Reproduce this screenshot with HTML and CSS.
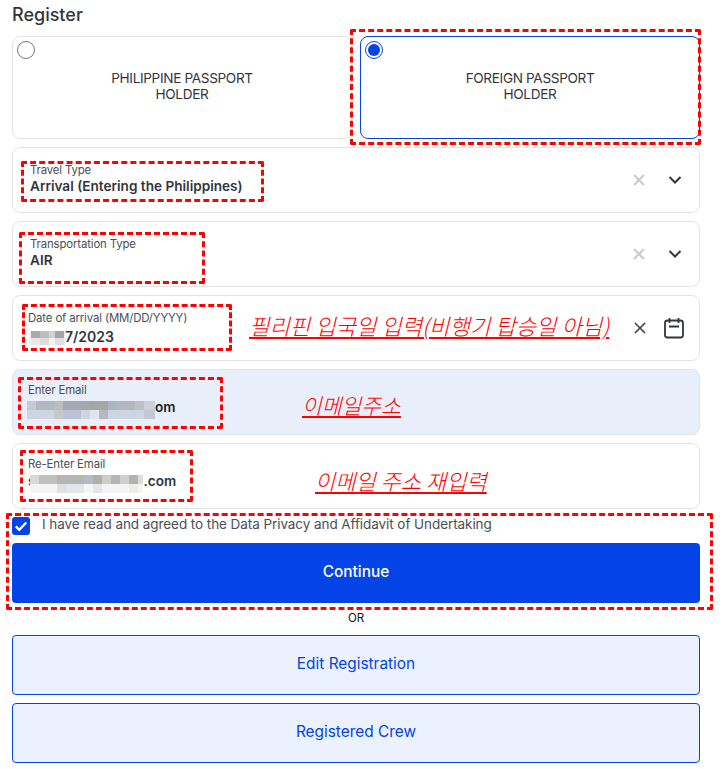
FILE: index.html
```html
<!DOCTYPE html>
<html lang="en">
<head>
<meta charset="utf-8">
<title>Register</title>
<link rel="stylesheet" href="styles.css">
</head>
<body>
<main class="page">
  <h1 class="title">Register</h1>
  <div class="passport-row">
    <div class="passport-card">
      <span class="radio"></span>
      <span class="passport-label">PHILIPPINE PASSPORT<br>HOLDER</span>
    </div>
    <div class="passport-card selected">
      <span class="radio checked"></span>
      <span class="passport-label">FOREIGN PASSPORT<br>HOLDER</span>
    </div>
  </div>

  <div class="field">
    <div class="field-text pad-wide">
      <span class="field-label">Travel Type</span>
      <span class="field-value">Arrival (Entering the Philippines)</span>
    </div>
    <svg class="icon-x muted" viewBox="0 0 14 14"><path d="M2 2l10 10M12 2l-10 10"/></svg>
    <svg class="icon-chevron" viewBox="0 0 14 10"><path d="M1.500 2l5.500 5.500 5.500-5.500"/></svg>
  </div>

  <div class="field">
    <div class="field-text pad-wide">
      <span class="field-label">Transportation Type</span>
      <span class="field-value">AIR</span>
    </div>
    <svg class="icon-x muted" viewBox="0 0 14 14"><path d="M2 2l10 10M12 2l-10 10"/></svg>
    <svg class="icon-chevron" viewBox="0 0 14 10"><path d="M1.500 2l5.500 5.500 5.500-5.500"/></svg>
  </div>

  <div class="field">
    <div class="field-text">
      <span class="field-label">Date of arrival (MM/DD/YYYY)</span>
      <span class="field-value value-date"><svg class="mosaic date-mosaic" viewBox="0 0 36 14" shape-rendering="crispEdges"><rect width="36" height="14" fill="#f1f1f1"/><rect x="2" width="9" height="7" fill="#a9a9ad"/><rect x="11" width="9" height="7" fill="#bdbdc0"/><rect x="20" width="6" height="7" fill="#d2d2d4"/><rect x="26" width="9" height="7" fill="#a5a5a8"/><rect x="2" y="7" width="9" height="7" fill="#e8e8e8"/><rect x="11" y="7" width="9" height="7" fill="#dcdcdc"/><rect x="20" y="7" width="6" height="7" fill="#f4f4f4"/><rect x="26" y="7" width="9" height="7" fill="#e0e0e0"/></svg>7/2023</span>
    </div>
    <svg class="icon-x dark" viewBox="0 0 14 14"><path d="M2 2l10 10M12 2l-10 10"/></svg>
    <svg class="icon-calendar" viewBox="0 0 22 22"><rect x="2" y="3.500" width="18" height="17" rx="2.500"/><path d="M6.500 1v5M15.500 1v5M6 9.500h10"/></svg>
  </div>

  <div class="field filled">
    <div class="field-text text-high">
      <span class="field-label">Enter Email</span>
      <span class="field-value value-email"><svg class="mosaic email-mosaic" viewBox="0 0 128 18" shape-rendering="crispEdges"><rect width="128" height="18" fill="#cdd5e3"/><rect width="128" height="9" fill="#b3b7c0"/><rect x="0" width="9" height="9" fill="#c6cad3"/><rect x="27" width="9" height="9" fill="#b9bdbf"/><rect x="36" width="18" height="9" fill="#a5a9b2"/><rect x="54" width="9" height="9" fill="#a2aab0"/><rect x="63" width="18" height="9" fill="#a5a5ac"/><rect x="81" width="9" height="9" fill="#abb5c0"/><rect x="108" width="9" height="9" fill="#bbc0ca"/><rect x="117" width="11" height="9" fill="#ccd0da"/><rect x="27" y="9" width="9" height="9" fill="#c8c8c8"/><rect x="36" y="9" width="18" height="9" fill="#b9c2d4"/><rect x="63" y="9" width="9" height="9" fill="#dfe4ee"/><rect x="72" y="9" width="9" height="9" fill="#b5b9c4"/><rect x="117" y="9" width="11" height="9" fill="#c2c8d4"/></svg>om</span>
    </div>
  </div>

  <div class="field">
    <div class="field-text text-high">
      <span class="field-label">Re-Enter Email</span>
      <span class="field-value value-reemail">s<svg class="mosaic reemail-mosaic" viewBox="0 0 113 18" shape-rendering="crispEdges"><rect width="113" height="18" fill="#f4f4f4"/><rect width="113" height="9" fill="#c0c0c0"/><rect x="0" width="9" height="9" fill="#d8d8d8"/><rect x="27" width="27" height="9" fill="#b5b5b5"/><rect x="54" width="9" height="9" fill="#b4bcc2"/><rect x="63" width="9" height="9" fill="#b0b0aa"/><rect x="72" width="9" height="9" fill="#cdcdc8"/><rect x="81" width="9" height="9" fill="#b5b5b8"/><rect x="90" width="9" height="9" fill="#cfcfcf"/><rect x="99" width="9" height="9" fill="#b5b3ae"/><rect x="108" width="5" height="9" fill="#dddddd"/><rect x="27" y="9" width="9" height="9" fill="#e0e0e0"/><rect x="36" y="9" width="18" height="9" fill="#e4e6ea"/><rect x="63" y="9" width="9" height="9" fill="#e4e6e8"/><rect x="99" y="9" width="9" height="9" fill="#ececea"/></svg>.com</span>
    </div>
  </div>

  <div class="consent">
    <svg class="checkbox" viewBox="0 0 18 18"><rect width="18" height="18" rx="3"/><path d="M3.800 9.400l3.500 3.500 7-7.400"/></svg>
    <span class="consent-text">I have read and agreed to the Data Privacy and Affidavit of Undertaking</span>
  </div>

  <button class="btn primary" type="button">Continue</button>
  <div class="or">OR</div>
  <button class="btn secondary" type="button">Edit Registration</button>
  <button class="btn secondary" type="button">Registered Crew</button>

  <!-- Annotations drawn over the screenshot -->
  <div class="mark mark-passport"></div>
  <div class="mark mark-travel"></div>
  <div class="mark mark-transport"></div>
  <div class="mark mark-date"></div>
  <div class="mark mark-email"></div>
  <div class="mark mark-reemail"></div>
  <div class="mark mark-consent"></div>
  <span class="note note-date">필리핀 입국일 입력(비행기 탑승일 아님)</span>
  <span class="note note-email">이메일주소</span>
  <span class="note note-reemail">이메일 주소 재입력</span>
</main>
</body>
</html>
```

FILE: styles.css
```css
* { box-sizing: border-box; }
html, body { margin: 0; padding: 0; background: #fff; }
body { font-family: "Inter", "Liberation Sans", sans-serif; color: #33363d; }
.page { position: relative; width: 726px; height: 769px; overflow: hidden; padding: 0 26px 0 12px; display: flex; flex-direction: column; }
.page > * { flex-shrink: 0; }

.title { margin: 0; height: 36px; padding-top: 2px; font-size: 18px; line-height: 25px; font-weight: 500; color: #33363d; }

.passport-row { display: flex; height: 103px; margin-bottom: 8px; }
.passport-card { position: relative; flex: 0 0 340px; border: 1px solid #e4e4e4; border-radius: 8px; display: flex; align-items: center; justify-content: center; padding: 0 0 4px; }
.passport-card.selected { border-color: #0443e6; margin-left: 8px; }
.passport-label { font-size: 13.6px; line-height: 16px; text-align: center; letter-spacing: -0.35px; color: #33363d; }
.radio { position: absolute; left: 4px; top: 4px; width: 18px; height: 18px; border: 1px solid #767676; border-radius: 50%; background: #fff; }
.radio.checked { border-color: #0443e6; }
.radio.checked::after { content: ""; position: absolute; left: 2px; top: 2px; width: 12px; height: 12px; border-radius: 50%; background: #0443e6; }

.field { display: flex; align-items: center; height: 66px; margin-bottom: 8px; border: 1px solid #e4e4e4; border-radius: 8px; padding: 0 16px 0 15px; background: #fff; }
.field.filled { background: #e8effb; }
.field-text { flex: 1; display: flex; flex-direction: column; min-width: 0; }
.field-text.pad-wide { padding-left: 2px; padding-bottom: 4px; }
.field-text.text-high { padding-bottom: 7px; }
.field-label { font-size: 11.4px; line-height: 16px; letter-spacing: -0.14px; color: #4b4e55; }
.field-value { height: 18px; font-size: 13.6px; line-height: 18px; font-weight: 600; color: #33363d; white-space: nowrap; display: flex; align-items: flex-start; }
.pad-wide .field-value { margin-top: -1px; }
.value-date { margin-top: 2px; font-size: 14px; letter-spacing: 0; }
.value-email { color: #1f2126; margin-left: -1px; margin-top: 0; }
.value-reemail { margin-top: 0; }
.mosaic { display: block; flex: none; }
.date-mosaic { width: 36px; height: 14px; margin-left: 1px; margin-top: 3px; }
.email-mosaic { width: 128px; height: 18px; margin-top: 3px; }
.reemail-mosaic { width: 113px; height: 18px; margin-left: -5px; margin-top: 3px; }

.icon-x { width: 14px; height: 14px; flex: none; fill: none; margin-right: 22px; }
.icon-x.muted { stroke: #cccccc; stroke-width: 2.2; }
.icon-x.dark { stroke: #3a4048; stroke-width: 1.6; margin-right: 16px; }
.icon-chevron { width: 14px; height: 10px; flex: none; fill: none; stroke: #33363d; stroke-width: 2; margin-right: 1px; }
.icon-calendar { width: 22px; height: 22px; flex: none; fill: none; stroke: #33363d; stroke-width: 1.8; margin-right: -2px; }

.consent { display: flex; align-items: center; gap: 12px; height: 18px; margin-bottom: 8px; }
.checkbox { width: 18px; height: 18px; flex: none; }
.checkbox rect { fill: #0443e6; }
.checkbox path { fill: none; stroke: #fff; stroke-width: 2.4; }
.consent-text { font-size: 13.5px; line-height: 16px; letter-spacing: -0.07px; color: #4b4e55; white-space: nowrap; position: relative; top: -2px; }

.btn { display: block; width: 100%; height: 60px; border-radius: 4px; font-family: inherit; font-size: 15.4px; padding: 0 0 4px; }
.btn.primary { background: #0443e6; border: 0; color: #fff; font-weight: 500; }
.btn.secondary { background: #ebf1fe; border: 1px solid #0443e6; color: #0443e6; margin-bottom: 8px; font-weight: 400; }
.or { height: 32px; padding-top: 7px; font-size: 11.5px; line-height: 16px; text-align: center; color: #111; }

.mark { position: absolute; border: 3px dashed #f00; border-radius: 2px; pointer-events: none; }
.mark-passport { left: 350px; top: 29px; width: 351px; height: 116px; }
.mark-travel { left: 21px; top: 161px; width: 243px; height: 41px; }
.mark-transport { left: 19px; top: 232px; width: 186px; height: 52px; }
.mark-date { left: 22px; top: 304px; width: 210px; height: 47px; }
.mark-email { left: 18px; top: 377px; width: 205px; height: 52px; }
.mark-reemail { left: 20px; top: 450px; width: 173px; height: 52px; }
.mark-consent { left: 6px; top: 513px; width: 707px; height: 97px; }

.note { position: absolute; font-family: "Noto Sans CJK KR", sans-serif; font-size: 22.2px; line-height: 24px; font-weight: 300; font-style: italic; color: #f00; text-decoration: underline; white-space: nowrap; }
.note-date { left: 249px; top: 313px; }
.note-email { left: 302px; top: 393px; font-size: 21.5px; }
.note-reemail { left: 315px; top: 468px; font-size: 22px; }
```
